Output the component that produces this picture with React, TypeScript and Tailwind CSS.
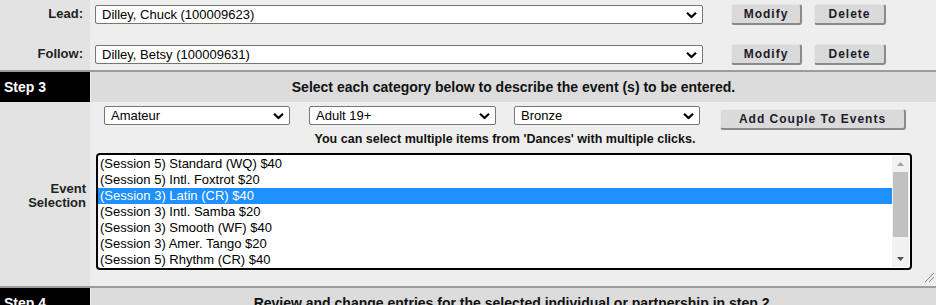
import React from "react";

const Chevron = () => (
    <svg width="11" height="7" viewBox="0 0 11 7" className="pointer-events-none absolute top-1/2 right-[6px] -translate-y-1/2">
        <path d="M1 1.2 L5.5 5.5 L10 1.2" fill="none" stroke="#000" strokeWidth="2.2" />
    </svg>
);

const DropDown: React.FC<{ value: string; width: string }> = ({ value, width }) => (
    <div className={`relative h-[19px] ${width}`}>
        <select
            defaultValue={value}
            className="block h-full w-full appearance-none rounded-[2px] border border-[#767676] bg-white pl-[6px] text-[13px] leading-[17px] text-black outline-none"
        >
            <option>{value}</option>
        </select>
        <Chevron />
    </div>
);

const GreyButton: React.FC<{ label: string; width: string }> = ({ label, width }) => (
    <button
        className={`block h-[21px] ${width} rounded-[3px] border border-t-[#e8e8e8] border-l-[#e8e8e8] border-r-2 border-b-2 border-r-[#8a8a8a] border-b-[#8a8a8a] bg-[#dadada] text-[12px] leading-[17px] font-bold tracking-[1px] text-[#1c1c2a]`}
    >
        {label}
    </button>
);

const events = [
    "(Session 5) Standard (WQ) $40",
    "(Session 5) Intl. Foxtrot $20",
    "(Session 3) Latin (CR) $40",
    "(Session 3) Intl. Samba $20",
    "(Session 3) Smooth (WF) $40",
    "(Session 3) Amer. Tango $20",
    "(Session 5) Rhythm (CR) $40",
];

const PersonRow: React.FC<{ label: string; person: string; height: string }> = ({ label, person, height }) => (
    <div className={`flex ${height}`}>
        <div className="w-[90px] bg-[#e3e3e3] pt-[6px] pr-[7px] text-right text-[13px] leading-[16px] font-bold text-[#222]">{label}</div>
        <div className="flex flex-1 items-start bg-[#eeeeee] pt-[5px] pl-[5px]">
            <DropDown value={person} width="w-[608px]" />
            <div className="ml-[28px] -mt-px flex gap-[12px]">
                <GreyButton label="Modify" width="w-[71px]" />
                <GreyButton label="Delete" width="w-[72px]" />
            </div>
        </div>
    </div>
);

const StepHeader: React.FC<{ step: string; text: string }> = ({ step, text }) => (
    <div className="flex h-[30px]">
        <div className="flex w-[90px] items-center bg-black pl-[4px] text-[14px] font-bold text-white">{step}</div>
        <div className="ml-px flex flex-1 items-center justify-center bg-[#dcdcdc] text-[14px] font-bold text-[#111]">
            {text}
        </div>
    </div>
);

export default function App() {
    return (
        <div className="w-[936px] overflow-hidden bg-[#eeeeee] font-['Liberation_Sans',Arial,sans-serif]">
            <PersonRow label="Lead:" person="Dilley, Chuck (100009623)" height="h-[40px]" />
            <PersonRow label="Follow:" person="Dilley, Betsy (100009631)" height="h-[30px]" />
            <div className="h-[2px] bg-[#9c9c9c]" />

            <StepHeader step="Step 3" text="Select each category below to describe the event (s) to be entered." />

            <div className="flex h-[184px]">
                <div className="flex w-[90px] items-center justify-end bg-[#e3e3e3] pt-[4px] pr-[4px] text-right text-[13px] leading-[14px] font-bold text-[#222]">
                    Event
                    <br />
                    Selection
                </div>
                <div className="relative ml-px flex flex-1 flex-col bg-[#eeeeee]">
                    <div className="flex items-start pt-[4px] pl-[13px]">
                        <DropDown value="Amateur" width="w-[186px]" />
                        <div className="ml-[19px]">
                            <DropDown value="Adult 19+" width="w-[187px]" />
                        </div>
                        <div className="ml-[18px]">
                            <DropDown value="Bronze" width="w-[186px]" />
                        </div>
                        <div className="mt-[3px] ml-[20px]">
                            <GreyButton label="Add Couple To Events" width="w-[186px]" />
                        </div>
                    </div>
                    <div className="mt-[2px] w-[828px] text-center text-[12.5px] leading-[15px] font-bold text-[#111]">
                        You can select multiple items from 'Dances' with multiple clicks.
                    </div>
                    <div className="mt-[6px] ml-[5px] flex h-[117px] w-[816px] rounded-[4px] border-2 border-black bg-white">
                        <div className="flex-1 pt-px">
                            {events.map((ev, i) => (
                                <div
                                    key={ev}
                                    className={`h-[16px] pl-[2px] text-[13px] leading-[16px] ${i === 2 ? "bg-[#1e90ff] text-white" : "text-black"}`}
                                >
                                    {ev}
                                </div>
                            ))}
                        </div>
                        <div className="my-px mr-px flex w-[17px] flex-col items-center bg-[#f1f1f1]">
                            <svg width="9" height="16" viewBox="0 0 9 16">
                                <path d="M1 10 L4.5 6 L8 10 Z" fill="#a3a3a3" />
                            </svg>
                            <div className="h-[65px] w-[15px] bg-[#c1c1c1]" />
                            <div className="flex-1" />
                            <svg width="9" height="16" viewBox="0 0 9 16">
                                <path d="M1 6 L4.5 10 L8 6 Z" fill="#505050" />
                            </svg>
                        </div>
                    </div>
                    <svg width="11" height="11" viewBox="0 0 11 11" className="absolute right-px bottom-[3px]">
                        <path d="M10 1 L1 10 M10 5 L5 10" stroke="#8a8a8a" strokeWidth="1" />
                    </svg>
                </div>
            </div>

            <div className="h-[2px] bg-[#9c9c9c]" />
            <StepHeader step="Step 4" text="Review and change entries for the selected individual or partnership in step 2." />
        </div>
    );
}
